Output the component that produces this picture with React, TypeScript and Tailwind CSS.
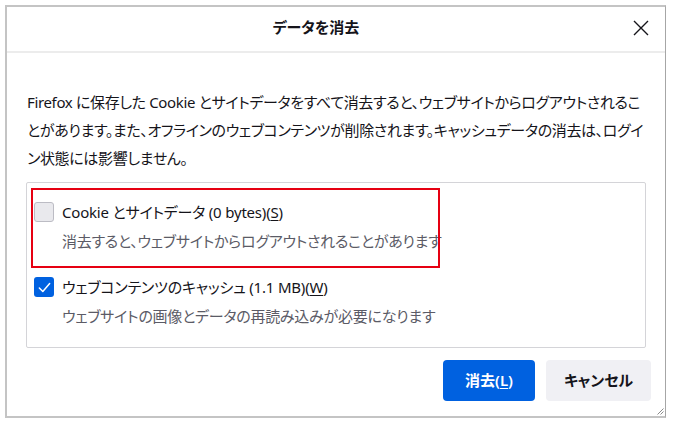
import React from "react";

const font = "font-['Noto_Sans','Noto_Sans_CJK_JP',sans-serif] [font-feature-settings:'palt']";

function CheckBox({ checked }: { checked: boolean }) {
  if (checked) {
    return (
      <span className="flex h-[20px] w-[20px] shrink-0 items-center justify-center rounded-[3px] bg-[#0061e0]">
        <svg viewBox="0 0 16 16" className="h-[15px] w-[15px]" fill="none">
          <path d="M2.5 8.5 L6.2 12.2 L13.5 3.8" stroke="white" strokeWidth="1.6" strokeLinecap="round" strokeLinejoin="round" />
        </svg>
      </span>
    );
  }
  return <span className="h-[20px] w-[20px] shrink-0 rounded-[3px] border border-[#bcbcc4] bg-[#e9e9ed]" />;
}

function Item({
  checked,
  label,
  accessKey,
  hint,
  highlight,
}: {
  checked: boolean;
  label: string;
  accessKey: string;
  hint: string;
  highlight?: boolean;
}) {
  return (
    <div className="relative">
      {highlight && (
        <span className="pointer-events-none absolute left-[-3px] top-[-14px] h-[80px] w-[409px] border-2 border-[#e60012]" />
      )}
      <div className="flex items-center gap-[8px]">
        <CheckBox checked={checked} />
        <span className="whitespace-nowrap text-[15px] leading-[20px] tracking-[-0.2px] text-[#15141a]">
          {label}(<span className="underline underline-offset-2">{accessKey}</span>)
        </span>
      </div>
      <div className="mt-[9px] pl-[28px] whitespace-nowrap text-[15px] leading-[20px] tracking-[-0.25px] text-[#5b5b66]">
        {hint}
      </div>
    </div>
  );
}

export default function App() {
  return (
    <div className={`h-[423px] w-[674px] bg-white pl-[5px] pt-[5px] ${font}`}>
      <div className="relative flex h-[413px] w-[661px] flex-col border-2 border-r border-[#c4c4c4] border-r-[#a6a6a6]">
        <div className="flex h-[46px] shrink-0 items-center border-b-2 border-[#ececec] pb-[3px]">
          <div className="flex-1 text-center text-[15px] font-bold text-[#15141a]">データを消去</div>
          <button type="button" className="mr-[8px] flex h-[32px] w-[32px] items-center justify-center">
            <svg viewBox="0 0 16 16" className="h-[16px] w-[16px]" fill="none">
              <path d="M1 1 L15 15 M15 1 L1 15" stroke="#15141a" strokeWidth="1.4" />
            </svg>
          </button>
        </div>

        <div className="flex flex-1 flex-col px-[19px]">
          <p className="mt-[35px] whitespace-nowrap pl-[1px] text-[15px] leading-[28px] tracking-[-0.35px] text-[#15141a]">
            Firefox に保存した Cookie とサイトデータをすべて消去すると、ウェブサイトからログアウトされるこ
            <br />
            とがあります。また、オフラインのウェブコンテンツが削除されます。キャッシュデータの消去は、ログイ
            <br />
            ン状態には影響しません。
          </p>

          <div className="mt-[10px] flex h-[166px] flex-col gap-[26px] rounded-[2px] border border-[#d4d4d8] pl-[7px] pt-[19px]">
            <Item
              checked={false}
              label="Cookie とサイトデータ (0 bytes)"
              accessKey="S"
              hint="消去すると、ウェブサイトからログアウトされることがあります"
              highlight
            />
            <Item
              checked
              label="ウェブコンテンツのキャッシュ (1.1 MB)"
              accessKey="W"
              hint="ウェブサイトの画像とデータの再読み込みが必要になります"
            />
          </div>

          <div className="mt-[12px] flex justify-end gap-[11px]">
            <button
              type="button"
              className="h-[41px] w-[92px] rounded-[4px] bg-[#0061e0] text-[15px] font-semibold text-white"
            >
              消去(<span className="underline underline-offset-2">L</span>)
            </button>
            <button
              type="button"
              className="mr-[-5px] h-[41px] w-[105px] rounded-[4px] bg-[#f0f0f4] text-[15px] font-semibold text-[#15141a]"
            >
              キャンセル
            </button>
          </div>
        </div>

        <svg viewBox="0 0 8 8" className="absolute bottom-[1px] right-[1px] h-[8px] w-[8px]" fill="none">
          <path d="M7.5 1.5 L1.5 7.5 M7.5 4.5 L4.5 7.5" stroke="#8a8a8a" strokeWidth="1" />
        </svg>
      </div>
    </div>
  );
}
